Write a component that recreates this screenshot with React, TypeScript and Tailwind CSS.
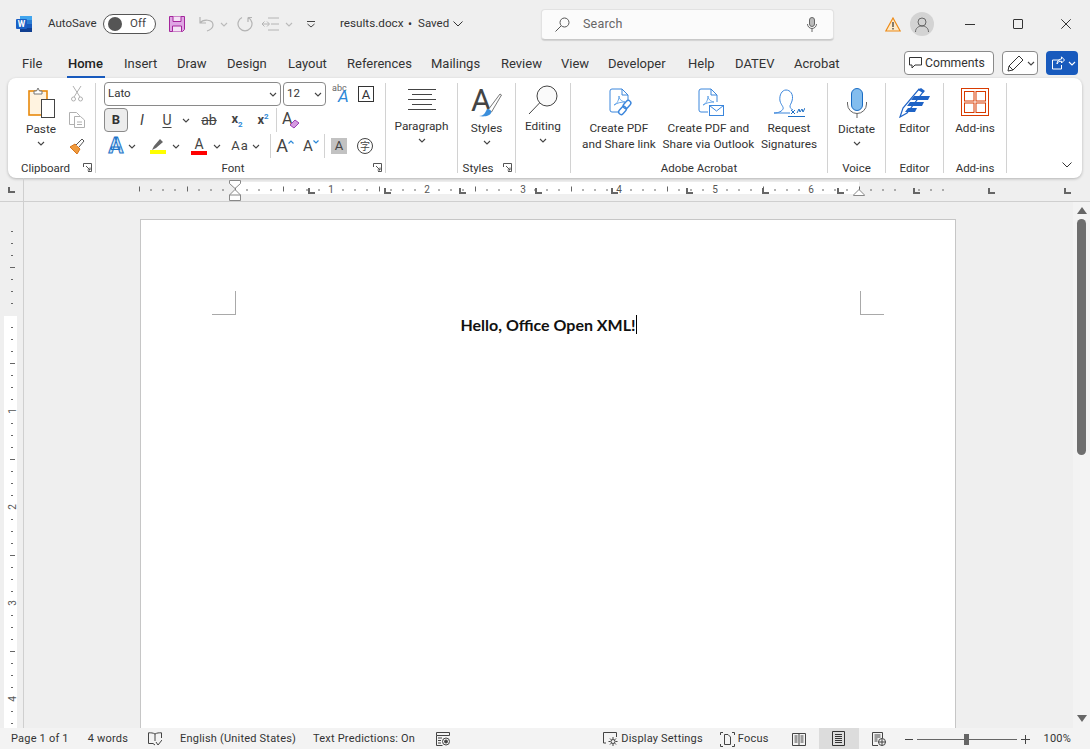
import type { ReactNode } from 'react'

const Chev = ({ className = '' }: { className?: string }) => (
  <svg width="8" height="5" viewBox="0 0 8 5" className={className} fill="none" stroke="#444" strokeWidth="1.1">
    <path d="M1 1l3 3 3-3" />
  </svg>
)

const Expander = () => (
  <svg width="9" height="9" viewBox="0 0 9 9" fill="none" stroke="#555" strokeWidth="1">
    <path d="M.5 4V.5h8v8H5M3 3l4 4M7 4.5V7H4.5" />
  </svg>
)

function Group({ label, width, pad = '', expander, children }: { label: string; width: string; pad?: string; expander?: boolean; children: ReactNode }) {
  return (
    <div className={`${width} flex flex-col border-r border-[#d2d2d2]`}>
      <div className="flex-1 min-h-0">{children}</div>
      <div className={`relative h-[14px] leading-[14px] text-center text-[11.5px] text-[#333] -mb-[2px] ${pad}`}>
        {label}
        {expander && (
          <span className="absolute right-[3px] top-[2px] flex">
            <Expander />
          </span>
        )}
      </div>
    </div>
  )
}

function Big({ icon, lines, chevron, top = 'mt-[3px]', height = 'h-[32px]' }: { icon: ReactNode; lines: string[]; chevron?: boolean; top?: string; height?: string }) {
  return (
    <div className={`flex flex-col items-center ${top}`}>
      <div className={`${height} flex items-center justify-center`}>{icon}</div>
      <div className="mt-[2px] text-[11.8px] leading-[16px] text-[#333] text-center whitespace-nowrap">
        {lines.map((l) => (
          <div key={l}>{l}</div>
        ))}
      </div>
      {chevron && <Chev className="mt-[4px]" />}
    </div>
  )
}

const Cell = ({ w, children }: { w: string; children: ReactNode }) => (
  <div className={`${w} h-[24px] shrink-0 flex items-center justify-center`}>{children}</div>
)

const Sep = ({ className }: { className: string }) => <div className={`w-px h-[24px] bg-[#d2d2d2] shrink-0 ${className}`} />

function WordLogo() {
  return (
    <svg width="16" height="16" viewBox="0 0 16 16">
      <rect x="4" y="0" width="12" height="4" fill="#41a5ee" />
      <rect x="4" y="4" width="12" height="4" fill="#2b7cd3" />
      <rect x="4" y="8" width="12" height="4" fill="#185abd" />
      <rect x="4" y="12" width="12" height="4" fill="#103f91" />
      <rect x="0" y="3" width="11" height="10" rx="1" fill="#1a5fc4" />
      <text x="5.5" y="11" textAnchor="middle" fontSize="8.5" fontWeight="700" fill="#fff" fontFamily="Roboto, sans-serif">W</text>
    </svg>
  )
}

function PdfIcon({ mail }: { mail?: boolean }) {
  return (
    <svg className="ml-[6px]" width="26" height="29" viewBox="0 0 26 29" fill="none" stroke="#3b86dc" strokeWidth="1">
      <path d="M10 24H3a2 2 0 0 1-2-2V3a2 2 0 0 1 2-2h10l6 6v7" />
      <path d="M13 1v6h6" />
      <path d="M5 17c3-1 5-5 5-9 0 3 2 5 6 6-4 0-8 1-11 3z" strokeWidth=".9" stroke="#5a9ee6" />
      {mail ? (
        <g>
          <rect x="11.5" y="17.5" width="14" height="10" fill="#fff" />
          <path d="M11.5 17.5l7 5.5 7-5.5" />
        </g>
      ) : (
        <g strokeWidth="1.4">
          <rect x="15.5" y="12" width="5" height="9" rx="2.5" transform="rotate(42 18 16.5)" fill="#fff" />
          <rect x="11" y="18" width="5" height="9" rx="2.5" transform="rotate(42 13.5 22.5)" fill="none" />
        </g>
      )}
    </svg>
  )
}

function TitleBar() {
  return (
    <div className="h-[48px] shrink-0 flex items-center text-[11.5px] text-[#333]">
      <div className="ml-[16px] flex"><WordLogo /></div>
      <span className="ml-[16px] w-[48px]">AutoSave</span>
      <div className="ml-[7px] w-[53px] h-[20px] rounded-full border border-[#555] bg-white flex items-center pl-[4px]">
        <span className="w-[14px] h-[14px] rounded-full bg-[#555]" />
        <span className="ml-[8px] text-[#444] text-[11.5px]">Off</span>
      </div>
      <svg className="ml-[13px]" width="16" height="16" viewBox="0 0 16 16" fill="#dfa6e4" stroke="#a4269c" strokeWidth="1">
        <path d="M.5.5h15v13l-2 2H.5z" />
        <path d="M4 .5v5h8v-5M3.5 15.5V10h9v5.5" fill="#f4e3f5" />
      </svg>
      <svg className="ml-[14px]" width="16" height="16" viewBox="0 0 16 16" fill="none" stroke="#b4b4b4" strokeWidth="1.2">
        <path d="M1 1v6h6M1 7c3-4 13-4 13 2 0 3-3 5-6 6" />
      </svg>
      <Chev className="ml-[5px] opacity-30" />
      <svg className="ml-[9px]" width="16" height="16" viewBox="0 0 16 16" fill="none" stroke="#b4b4b4" strokeWidth="1.2">
        <path d="M11 1.5A7 7 0 1 1 5 1.5M11 1.5V6M11 1.5h4" />
      </svg>
      <svg className="ml-[9px]" width="17" height="14" viewBox="0 0 17 14" fill="none" stroke="#b4b4b4" strokeWidth="1">
        <path d="M6 1h11M9 7h8M6 13h11M0 7h7M2.5 4.5L0 7l2.5 2.5M5 4.5L7.5 7 5 9.5" />
      </svg>
      <Chev className="ml-[6px] opacity-30" />
      <svg className="ml-[14px]" width="8" height="7" viewBox="0 0 8 7" fill="none" stroke="#444" strokeWidth="1">
        <path d="M0 .5h8M.5 3l3.5 3 3.5-3" />
      </svg>
      <div className="ml-[25px] w-[123px] flex items-center text-[12px]">
        <span className="w-[62px] whitespace-nowrap text-[11.7px]">results.docx</span>
        <span className="ml-[6px]">•</span>
        <span className="ml-[6px] text-[11.5px]">Saved</span>
        <svg className="ml-auto" width="10" height="6" viewBox="0 0 10 6" fill="none" stroke="#333" strokeWidth="1">
          <path d="M.5.5L5 5 9.5.5" />
        </svg>
      </div>
      <div className="ml-[78px] w-[293px] h-[31px] bg-[#fbfbfb] rounded-[4px] border border-[#e2e2e2] border-b-[#c9c9c9] shadow-[0_1px_1px_rgba(0,0,0,0.12)] flex items-center pl-[13px] pr-[16px]">
        <svg width="15" height="15" viewBox="0 0 15 15" fill="none" stroke="#555" strokeWidth="1">
          <circle cx="9.5" cy="5.5" r="4.5" />
          <path d="M6 9l-5.5 5.5" />
        </svg>
        <span className="ml-[13px] text-[#666] text-[12.5px] tracking-[0.2px]">Search</span>
        <svg className="ml-auto" width="10" height="15" viewBox="0 0 10 15" fill="none" stroke="#666" strokeWidth="1">
          <rect x="2.5" y=".5" width="5" height="9" rx="2.5" fill="#bbb" />
          <path d="M.5 7a4.5 4.5 0 0 0 9 0M5 11.5V15" />
        </svg>
      </div>
      <svg className="ml-[51px]" width="16" height="15" viewBox="0 0 16 15">
        <path d="M8 1l7.2 13H.8z" fill="#fde9c8" stroke="#ed8b18" strokeWidth="1.2" />
        <path d="M8 5v5M8 11v1.5" stroke="#333" strokeWidth="1.2" />
      </svg>
      <div className="ml-[9px] w-[24px] h-[24px] rounded-full bg-[#d3d3d3] flex items-center justify-center">
        <svg width="14" height="15" viewBox="0 0 14 15" fill="none" stroke="#666" strokeWidth="1">
          <circle cx="7" cy="5" r="4" />
          <path d="M.5 15c0-4 3-6 6.5-6s6.5 2 6.5 6" />
        </svg>
      </div>
      <div className="ml-[31px] w-[10px] h-px bg-[#333]" />
      <div className="ml-[38px] w-[10px] h-[10px] border border-[#333] rounded-[1px]" />
      <svg className="ml-[38px]" width="10" height="10" viewBox="0 0 10 10" stroke="#333" strokeWidth="1">
        <path d="M.3.3l9.4 9.4M9.7.3L.3 9.7" />
      </svg>
    </div>
  )
}

const tabs = [
  { name: 'File', w: 'w-[46px]' },
  { name: 'Home', w: 'w-[56px]' },
  { name: 'Insert', w: 'w-[53px]' },
  { name: 'Draw', w: 'w-[50px]' },
  { name: 'Design', w: 'w-[61px]' },
  { name: 'Layout', w: 'w-[59px]' },
  { name: 'References', w: 'w-[84px]' },
  { name: 'Mailings', w: 'w-[70px]' },
  { name: 'Review', w: 'w-[60px]' },
  { name: 'View', w: 'w-[47px]' },
  { name: 'Developer', w: 'w-[80px]' },
  { name: 'Help', w: 'w-[47px]' },
  { name: 'DATEV', w: 'w-[59px]' },
  { name: 'Acrobat', w: 'w-[48px]' },
]

function TabsRow() {
  return (
    <div className="h-[30px] shrink-0 flex items-start">
      <div className="ml-[22px] w-[862px] flex text-[13px] text-[#333] pt-[6px]">
        {tabs.map((t) =>
          t.name === 'Home' ? (
            <div key={t.name} className={t.w}>
              <span className="relative font-medium text-[#222]">
                {t.name}
                <span className="absolute -left-[1px] -right-[2px] top-[20px] h-[2px] bg-[#185abd]" />
              </span>
            </div>
          ) : (
            <div key={t.name} className={t.w}>{t.name}</div>
          ),
        )}
      </div>
      <div className="ml-[20px] mt-[3px] w-[90px] h-[24px] rounded-[4px] border border-[#8a8a8a] bg-white flex items-center pl-[4px] text-[12.2px] text-[#333]">
        <svg width="13" height="12" viewBox="0 0 13 12" fill="none" stroke="#333" strokeWidth="1">
          <path d="M.5.5h12v7.500H6l-3 3V8H.5z" />
        </svg>
        <span className="ml-[3px]">Comments</span>
      </div>
      <div className="ml-[8px] mt-[3px] w-[36px] h-[24px] rounded-[4px] border border-[#8a8a8a] bg-white flex items-center pl-[4px]">
        <svg width="17" height="17" viewBox="0 0 17 17" fill="none" stroke="#333" strokeWidth="1">
          <path d="M1 16l1-5L12 1l4 4L6 15zM2 11l4 4" />
        </svg>
        <Chev className="ml-[3px]" />
      </div>
      <div className="ml-[8px] mt-[3px] w-[32px] h-[24px] rounded-[4px] bg-[#185abd] flex items-center pl-[5px]">
        <svg width="14" height="14" viewBox="0 0 14 14" fill="none" stroke="#fff" strokeWidth="1">
          <path d="M9 4H1.5v9h9V9M6 8c0-3 2-5 4.5-5V.8L13.5 4l-3 3V5.2C8 5.2 7 6 6 8z" />
        </svg>
        <svg className="ml-[3px]" width="8" height="5" viewBox="0 0 8 5" fill="none" stroke="#fff" strokeWidth="1.1">
          <path d="M1 1l3 3 3-3" />
        </svg>
      </div>
    </div>
  )
}

function ClipboardGroup() {
  return (
    <Group label="Clipboard" width="w-[88px]" pad="pr-[12px]" expander>
      <div className="flex">
        <div className="ml-[12px] w-[42px]">
          <Big
            top="mt-[3px]"
            height="h-[33px]"
            lines={['Paste']}
            chevron
            icon={
              <svg width="27" height="31" viewBox="0 0 27 31" fill="none">
                <rect x="1" y="4" width="18" height="24" fill="#fff3e0" stroke="#e8890c" strokeWidth="1.6" />
                <path d="M6 7V4h2.5L10 1l1.5 3H14v3z" fill="#fff" stroke="#777" strokeWidth="1" />
                <rect x="13.5" y="12.5" width="13" height="18" fill="#fff" stroke="#444" strokeWidth="1" />
              </svg>
            }
          />
        </div>
        <div className="ml-[1px] w-[28px] flex flex-col items-center gap-[10px] pt-[3px]">
          <svg width="12" height="16" viewBox="0 0 12 16" fill="none" stroke="#b0b0b0" strokeWidth="1">
            <path d="M2 0l7 11M10 0L3 11" />
            <circle cx="2.5" cy="13" r="2" />
            <circle cx="9.5" cy="13" r="2" />
          </svg>
          <svg width="16" height="16" viewBox="0 0 16 16" fill="#fff" stroke="#b0b0b0" strokeWidth="1">
            <path d="M.5.5h7l3 3v9h-10z" />
            <path d="M5.500 4.500h6l4 3.500v7.500h-10zM8 10h5M8 12.500h5" />
          </svg>
          <svg width="16" height="16" viewBox="0 0 16 16">
            <path d="M1 9l5-3 5 5-3 5z" fill="#ef9a3d" stroke="#d9751a" strokeWidth="1" />
            <path d="M7 7l6-6 2 2-5 6" fill="#fff" stroke="#555" strokeWidth="1" />
          </svg>
        </div>
      </div>
    </Group>
  )
}

function FontGroup() {
  return (
    <Group label="Font" width="w-[290px]" pad="pr-[15px]" expander>
      <div className="pl-[8px] -mt-[1px] flex flex-col gap-[2px] text-[#444]">
        <div className="flex items-center h-[24px]">
          <div className="w-[177px] h-[24px] bg-white border border-[#8a8a8a] rounded-[4px] flex items-center pl-[3px] pr-[3px] text-[11.5px] text-[#333]">
            Lato
            <Chev className="ml-auto" />
          </div>
          <div className="ml-[2px] w-[43px] h-[24px] bg-white border border-[#8a8a8a] rounded-[4px] flex items-center pl-[3px] pr-[3px] text-[11.5px] text-[#333]">
            12
            <Chev className="ml-auto" />
          </div>
          <svg className="ml-[6px] overflow-visible" width="18" height="18" viewBox="0 0 18 18">
            <text x="0" y="6" fontSize="9" fill="#666" fontFamily="Roboto, sans-serif">abc</text>
            <text x="6" y="17" fontSize="17" fontStyle="italic" fill="#2b88d8" fontFamily="Roboto, sans-serif">A</text>
          </svg>
          <div className="ml-[8px] w-[16px] h-[16px] border border-[#333] flex items-center justify-center text-[13px] leading-none text-[#333]">A</div>
        </div>
        <div className="flex items-center h-[24px]">
          <div className="w-[24px] h-[24px] bg-[#ececec] border border-[#8a8a8a] rounded-[4px] flex items-center justify-center text-[13px] font-bold text-[#333]">B</div>
          <Cell w="ml-[2px] w-[24px]"><span className="italic text-[15px]">I</span></Cell>
          <Cell w="ml-[1px] w-[24px]"><span className="underline text-[14px] underline-offset-2">U</span></Cell>
          <Cell w="ml-[1px] w-[12px]"><Chev /></Cell>
          <Cell w="ml-[5px] w-[24px]"><span className="line-through text-[14px]">ab</span></Cell>
          <Cell w="ml-[4px] w-[24px]">
            <span className="text-[13px] font-bold">x<span className="text-[8px] text-[#2b88d8] align-sub">2</span></span>
          </Cell>
          <Cell w="ml-[2px] w-[24px]">
            <span className="text-[13px] font-bold">x<span className="text-[8px] text-[#2b88d8] align-super">2</span></span>
          </Cell>
          <Sep className="ml-[1px]" />
          <Cell w="ml-[2px] w-[24px]">
            <svg className="overflow-visible" width="18" height="18" viewBox="0 0 18 18" fill="none">
              <text x="0" y="13" fontSize="16" fill="#444" fontFamily="Roboto, sans-serif">A</text>
              <path d="M8 14l5-5 4 3-5 5z" fill="#d59ae0" stroke="#9b3fb5" strokeWidth="1" />
            </svg>
          </Cell>
        </div>
        <div className="flex items-center h-[24px]">
          <Cell w="w-[24px]">
            <span className="text-[22px] font-bold leading-none text-[#cfe6f8] [-webkit-text-stroke:1px_#1c74c9]">A</span>
          </Cell>
          <Cell w="-ml-[2px] w-[12px]"><Chev /></Cell>
          <Cell w="ml-[8px] w-[24px]">
            <div className="flex flex-col items-center">
              <svg width="14" height="11" viewBox="0 0 14 11" fill="#666">
                <path d="M1 11l2-4 6-7 3 3-7 6zM0 11h6" />
              </svg>
              <div className="w-[16px] h-[4px] bg-[#ffff00]" />
            </div>
          </Cell>
          <Cell w="w-[12px]"><Chev /></Cell>
          <Cell w="ml-[5px] w-[24px]">
            <div className="flex flex-col items-center">
              <span className="text-[14px] leading-[13px]">A</span>
              <div className="w-[16px] h-[4px] bg-[#ff0000]" />
            </div>
          </Cell>
          <Cell w="w-[12px]"><Chev /></Cell>
          <Cell w="ml-[5px] w-[24px]"><span className="text-[13px] tracking-[1px] whitespace-nowrap">Aa</span></Cell>
          <Cell w="-ml-[2px] w-[12px]"><Chev /></Cell>
          <Sep className="ml-[8px]" />
          <Cell w="ml-[2px] w-[24px]">
            <span className="text-[18px] leading-none">A</span>
            <svg className="mb-[8px]" width="6" height="4" viewBox="0 0 6 4" fill="none" stroke="#2b88d8" strokeWidth="1.2"><path d="M.5 3.5L3 1l2.5 2.5" /></svg>
          </Cell>
          <Cell w="ml-[2px] w-[24px]">
            <span className="text-[15px] leading-none">A</span>
            <svg className="mb-[8px]" width="6" height="4" viewBox="0 0 6 4" fill="none" stroke="#2b88d8" strokeWidth="1.2"><path d="M.5.5L3 3 5.5.5" /></svg>
          </Cell>
          <Sep className="ml-[1px]" />
          <div className="ml-[6px] w-[16px] h-[16px] bg-[#c2c2c2] flex items-center justify-center text-[13px] text-[#444]">A</div>
          <Cell w="ml-[6px] w-[24px]">
            <div className="w-[16px] h-[16px] rounded-full border border-[#444] flex items-center justify-center text-[10px] leading-none font-['Noto_Sans_CJK_SC',sans-serif]">字</div>
          </Cell>
        </div>
      </div>
    </Group>
  )
}

function Ribbon() {
  return (
    <div className="ml-[8px] w-[1074px] h-[100px] shrink-0 bg-white rounded-[8px] shadow-[0_1px_3px_rgba(0,0,0,0.25)] flex py-[5px]">
      <ClipboardGroup />
      <FontGroup />
      <Group label="" width="w-[72px]">
        <Big
          top="mt-[1px]"
          lines={['Paragraph']}
          chevron
          icon={
            <svg width="28" height="22" viewBox="0 0 28 22" stroke="#444" strokeWidth="1">
              <path d="M0 .5h28M4 5.5h20M0 10.5h28M4 15.5h20M0 20.5h28" />
            </svg>
          }
        />
      </Group>
      <Group label="Styles" width="w-[58px]" pad="pr-[17px]" expander>
        <Big
          top="mt-[4px]"
          lines={['Styles']}
          chevron
          height="h-[31px]"
          icon={
            <svg className="overflow-visible" width="31" height="29" viewBox="0 0 31 29">
              <text x="0" y="23" fontSize="31" fill="#444" fontFamily="Roboto, sans-serif">A</text>
              <path d="M17 22l12-16 1.5 1-10 17z" fill="#fff" stroke="#555" strokeWidth=".8" />
              <path d="M8 28c5 0 6-3 8-7 3 0 5 2 4 4-1 3-7 4-12 3z" fill="#3b8fdc" />
            </svg>
          }
        />
      </Group>
      <Group label="" width="w-[55px]">
        <Big
          top="mt-[1px]"
          lines={['Editing']}
          chevron
          icon={
            <svg width="30" height="30" viewBox="0 0 30 30" fill="none" stroke="#444" strokeWidth="1">
              <circle cx="19" cy="11" r="10" fill="#fafafa" />
              <path d="M11.5 18L1 29" />
            </svg>
          }
        />
      </Group>
      <Group label="Adobe Acrobat" width="w-[257px]">
        <div className="flex justify-between pl-[11px] pr-[10px]">
          <Big lines={['Create PDF', 'and Share link']} top="mt-[4px]" height="h-[31px]" icon={<PdfIcon />} />
          <Big lines={['Create PDF and', 'Share via Outlook']} top="mt-[4px]" height="h-[31px]" icon={<PdfIcon mail />} />
          <Big
            lines={['Request', 'Signatures']}
            top="mt-[4px]"
            height="h-[31px]"
            icon={
              <svg width="32" height="28" viewBox="0 0 32 28" fill="none" stroke="#3b86dc" strokeWidth="1">
                <path d="M1 24c5 0 8-2 9-4 1-2-2-4-3-8C6 6 9 1 13 1s8 4 6 11c-1 3-2 4-2 5 0 2 1 3 3 4M1 24h16" />
                <path d="M18 21l4 4M22 21l-4 4M24 24l2-4 1 3 2-3 1 3 2-4" stroke="#1f6fc4" />
                <path d="M15 27.5h17" stroke="#1f6fc4" />
              </svg>
            }
          />
        </div>
      </Group>
      <Group label="Voice" width="w-[58px]">
        <Big
          lines={['Dictate']}
          chevron
          top="mt-[3px]"
          height="h-[33px]"
          icon={
            <svg width="20" height="30" viewBox="0 0 20 30" fill="none">
              <rect x="4.5" y=".5" width="11" height="22" rx="5.5" fill="#83bdee" stroke="#1a6cc4" />
              <path d="M.5 14v2a9.5 9.5 0 0 0 19 0v-2M10 25v5" stroke="#666" />
            </svg>
          }
        />
      </Group>
      <Group label="Editor" width="w-[58px]">
        <Big
          lines={['Editor']}
          icon={
            <svg width="31" height="31" viewBox="0 0 31 31" fill="none">
              <path d="M1 30l3-9L20 2l4 3L8 26z" fill="#fff" stroke="#1f63c6" strokeWidth="1.2" />
              <path d="M19 3l3-2 4 3-2 2z" fill="#1f63c6" />
              <path d="M15 9h16l-2 4H12zM11 15h14l-2 4H8zM9 21h9l-2 4H6z" fill="#1f63c6" />
            </svg>
          }
        />
      </Group>
      <Group label="Add-ins" width="w-[63px]">
        <Big
          lines={['Add-ins']}
          icon={
            <svg width="28" height="28" viewBox="0 0 28 28" fill="none" stroke="#d83b01" strokeWidth="1">
              <rect x=".5" y=".5" width="27" height="27" />
              <rect x="3.5" y="3.5" width="9.5" height="9.5" />
              <rect x="15" y="3.5" width="9.5" height="9.5" />
              <rect x="3.5" y="15" width="9.5" height="9.5" />
              <rect x="15" y="15" width="9.5" height="9.5" />
            </svg>
          }
        />
      </Group>
      <div className="flex-1 flex items-end justify-end pr-[10px] pb-[5px]">
        <svg width="10" height="6" viewBox="0 0 10 6" fill="none" stroke="#333" strokeWidth="1">
          <path d="M.5.5L5 5 9.5.5" />
        </svg>
      </div>
    </div>
  )
}

const hTicks = Array.from({ length: 68 }, (_, i) => 139 + i * 12)
const tabStops = [310, 386, 461, 537, 613, 688, 764, 839, 915, 990, 1066]

function HorizontalRuler() {
  return (
    <div className="h-[24px] shrink-0">
      <svg width="1090" height="24" viewBox="0 0 1090 24">
        <rect x="235" y="4" width="624" height="12" fill="#fff" />
        <path d="M23.5 0v24" stroke="#cfcfcf" />
        <path d="M0 23.5h1090" stroke="#cfcfcf" />
        {hTicks.map((x) => {
          const n = (x - 235) / 96
          if (Number.isInteger(n) && n > 0) return null
          const long = Number.isInteger(n * 2) || n === 0
          return long ? <path key={x} d={`M${x + 0.5} 8.5v5`} stroke="#666" /> : <path key={x} d={`M${x} 11v2`} stroke="#666" />
        })}
        {[1, 2, 3, 4, 5, 6].map((n) => (
          <text key={n} x={235 + n * 96} y="15" textAnchor="middle" fontSize="10" fill="#555" fontFamily="Roboto, sans-serif">{n}</text>
        ))}
        {tabStops.map((x) => (
          <path key={x} d={`M${x - 1} 10v5h6`} fill="none" stroke="#666" strokeWidth="2" />
        ))}
        <path d="M9 9v5h6" fill="none" stroke="#666" strokeWidth="2" />
        <path d="M229.5 2.5h11v3l-5.5 5-5.5-5zM229.5 17l5.5-5.5 5.5 5.5v5.5h-11zM229.5 17h11" fill="#fff" stroke="#888" />
        <path d="M853.5 17l5.5-5.5 5.5 5.5v.5h-11z" fill="#fff" stroke="#888" />
      </svg>
    </div>
  )
}

const vTicks = Array.from({ length: 43 }, (_, i) => 219 + i * 12)

function VerticalRuler() {
  return (
    <div className="w-[24px] shrink-0 border-r border-[#cfcfcf] flex">
      <svg width="23" height="526" viewBox="0 0 23 526">
        <rect x="4" y="114" width="13" height="412" fill="#fff" />
        {vTicks.map((y) => {
          const n = (y - 315) / 96
          if (Number.isInteger(n)) return null
          const long = Number.isInteger(n * 2)
          return long ? <path key={y} d={`M10 ${y - 201.5}h5`} stroke="#666" /> : <path key={y} d={`M11 ${y - 201.5}h2`} stroke="#666" />
        })}
        {[1, 2, 3, 4].map((n) => (
          <text key={n} x="0" y="0" transform={`translate(15.5 ${113 + n * 96}) rotate(-90)`} textAnchor="middle" fontSize="10" fill="#555" fontFamily="Roboto, sans-serif">{n}</text>
        ))}
      </svg>
    </div>
  )
}

function Page() {
  return (
    <div className="relative ml-[116px] mt-[17px] w-[816px] h-[600px] bg-white border border-[#c6c6c6] pt-[94px] text-center">
      <span className="absolute left-[71px] top-[71px] w-[24px] h-[24px] border-r border-b border-[#a9a9a9]" />
      <span className="absolute left-[719px] top-[71px] w-[24px] h-[24px] border-l border-b border-[#a9a9a9]" />
      <div className="relative inline-block font-['Lato',sans-serif] font-bold text-[16px] leading-[20px] text-[#111]">
        Hello, Office Open XML!
        <span className="absolute -right-[1px] top-0 w-px h-[19px] bg-black" />
      </div>
    </div>
  )
}

function Scrollbar() {
  return (
    <div className="w-[17px] shrink-0 bg-[#f3f3f3] flex flex-col items-center pt-[5px] pb-[6px]">
      <svg width="10" height="7" viewBox="0 0 10 7" fill="#666"><path d="M5 0l5 7H0z" /></svg>
      <div className="mt-[5px] w-[9px] h-[236px] rounded-full bg-[#6e6e6e]" />
      <svg className="mt-auto" width="10" height="7" viewBox="0 0 10 7" fill="#666"><path d="M0 0h10L5 7z" /></svg>
    </div>
  )
}

function StatusBar() {
  return (
    <div className="h-[21px] shrink-0 bg-[#f3f3f3] flex items-center text-[11px] text-[#333] tracking-[0.2px] pt-[1px]">
      <span className="ml-[11px]">Page 1 of 1</span>
      <span className="ml-[19px]">4 words</span>
      <svg className="ml-[20px]" width="14" height="14" viewBox="0 0 14 14" fill="none" stroke="#444" strokeWidth="1">
        <path d="M7 2C5 .8 3 .8.5.8v10.7H5l2 1.5M7 2c2-1.200 4-1.200 6.500-1.200V6M7 2v7M8 10l2 3 4-5" />
      </svg>
      <span className="ml-[18px]">English (United States)</span>
      <span className="ml-[17px]">Text Predictions: On</span>
      <svg className="ml-[21px]" width="14" height="14" viewBox="0 0 14 14" fill="none" stroke="#444" strokeWidth="1">
        <path d="M.5.5h13v3H.5zM.5 3.5v10h6M2 6h4M2 8.5h3M2 11h3" />
        <circle cx="10" cy="9.5" r="3.5" />
        <circle cx="10" cy="9.5" r="1.5" fill="#444" />
      </svg>
      <div className="ml-auto pr-[19px] flex items-center">
        <svg width="15" height="14" viewBox="0 0 15 14" fill="none" stroke="#444" strokeWidth="1">
          <path d="M3 11H.5V.5h13V5" />
          <circle cx="10" cy="9.5" r="2" />
          <path d="M10 5v2M10 12v2M5.5 9.5h2M12.5 9.5h2M7 6.5L8.500 8M11.5 11l1.500 1.500M13 6.500L11.500 8M8.500 11L7 12.500" />
        </svg>
        <span className="ml-[3px]">Display Settings</span>
        <svg className="ml-[17px]" width="15" height="15" viewBox="0 0 15 15" fill="none" stroke="#444" strokeWidth="1">
          <path d="M.5 3V.5H3M12 .5h2.5V3M.5 12v2.500H3M12 14.500h2.500V12M4.500 2.500H8l2.500 2.500v7.500h-6z" />
        </svg>
        <span className="ml-[3px]">Focus</span>
        <svg className="ml-[23px]" width="14" height="13" viewBox="0 0 14 13" fill="none" stroke="#444" strokeWidth="1">
          <path d="M.5.5h13v12H.5zM7 .5v12M2.500 3h3M2.500 5h3M2.500 7h3M2.500 9h3M8.500 3h3M8.500 5h3M8.500 7h3M8.500 9h3" />
        </svg>
        <div className="ml-[13px] w-[40px] h-[21px] -mt-[1px] bg-[#dcdcdc] flex items-center justify-center">
          <svg width="13" height="15" viewBox="0 0 13 15" fill="none" stroke="#333" strokeWidth="1">
            <path d="M.5.5h12v14H.5zM3 3.5h7M3 5.5h7M3 7.5h7M3 9.5h7M3 11.5h7" />
          </svg>
        </div>
        <svg className="ml-[13px]" width="14" height="14" viewBox="0 0 14 14" fill="none" stroke="#444" strokeWidth="1">
          <path d="M6 13.5H.5V.5h10V6M2.5 3h6M2.5 5h6M2.5 7h3M2.5 9h3" />
          <circle cx="10" cy="10" r="3.5" fill="#f3f3f3" />
          <path d="M6.5 10h7M10 6.5v7" />
        </svg>
        <span className="ml-[19px] w-[8px] h-px bg-[#444]" />
        <div className="ml-[4px] relative w-[100px] h-px bg-[#666]">
          <span className="absolute left-[47px] -top-[5px] w-[5px] h-[11px] bg-[#666]" />
        </div>
        <svg className="ml-[4px]" width="9" height="9" viewBox="0 0 9 9" stroke="#444" strokeWidth="1">
          <path d="M0 4.5h9M4.5 0v9" />
        </svg>
        <span className="ml-[14px]">100%</span>
      </div>
    </div>
  )
}

export default function App() {
  return (
    <div className="w-[1090px] h-[749px] overflow-hidden bg-[#efefef] flex flex-col font-['Roboto',sans-serif]">
      <TitleBar />
      <TabsRow />
      <Ribbon />
      <HorizontalRuler />
      <div className="flex-1 min-h-0 flex overflow-hidden">
        <VerticalRuler />
        <div className="flex-1 min-w-0 overflow-hidden">
          <Page />
        </div>
        <Scrollbar />
      </div>
      <StatusBar />
    </div>
  )
}
